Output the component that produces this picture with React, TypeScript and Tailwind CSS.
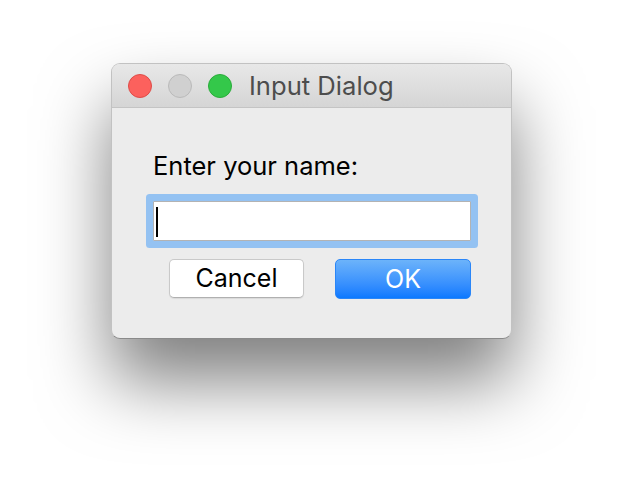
import { useState } from 'react';

function TrafficLight({ color, ring }: { color: string; ring: string }) {
  return <span className={`h-[24px] w-[24px] rounded-full border ${color} ${ring}`} />;
}

export default function App() {
  const [name, setName] = useState('');

  return (
    <div className="min-h-[498px] w-[624px] bg-white pl-[111px] pt-[63px] font-['Inter',sans-serif]">
      <div className="w-[401px] overflow-hidden rounded-[9px] border border-[#c2c2c2] border-b-[#8a8a8a] bg-[#ececec] shadow-[0_42px_70px_rgba(0,0,0,0.5)]">
        {/* title bar */}
        <div className="flex h-[44px] items-center border-b border-[#c4c4c4] bg-gradient-to-b from-[#e8e8e8] to-[#d5d5d5] pl-[16px]">
          <div className="flex gap-[16px]">
            <TrafficLight color="bg-[#fc615d]" ring="border-[#de4c48]" />
            <TrafficLight color="bg-[#d0d0d0]" ring="border-[#bababa]" />
            <TrafficLight color="bg-[#34c84a]" ring="border-[#2aac3a]" />
          </div>
          <span className="ml-[17px] text-[25.6px] leading-[30px] text-[#4d4d4d]">Input Dialog</span>
        </div>

        {/* body */}
        <div className="pl-[41px] pr-[40px] pb-[39px] pt-[43px]">
          <label htmlFor="name" className="block text-[25.5px] leading-[30px] text-black">
            Enter your name:
          </label>
          <div className="relative mt-[20px] h-[40px] w-[318px] rounded-[1px] border border-[#b3b3b3] bg-white shadow-[0_0_0_7px_#94c2f2]">
            <input
              id="name"
              value={name}
              onChange={(e) => setName(e.target.value)}
              className="h-full w-full bg-transparent px-[3px] text-[23px] outline-none"
            />
            {name === '' && <span className="absolute left-[2px] top-[5px] h-[30px] w-[2px] bg-black" />}
          </div>
          <div className="mt-[18px] flex justify-end gap-[31px]">
            <button className="h-[39px] w-[135px] rounded-[5px] border border-[#c9c9c9] border-b-[#b0b0b0] bg-white text-[25px] leading-none text-black shadow-[0_1px_1px_rgba(0,0,0,0.08)]">
              Cancel
            </button>
            <button className="h-[40px] w-[136px] rounded-[5px] border border-[#2a86f8] bg-gradient-to-b from-[#6cb3fa] to-[#0a79ff] text-[25px] leading-none text-white">
              OK
            </button>
          </div>
        </div>
      </div>
    </div>
  );
}
